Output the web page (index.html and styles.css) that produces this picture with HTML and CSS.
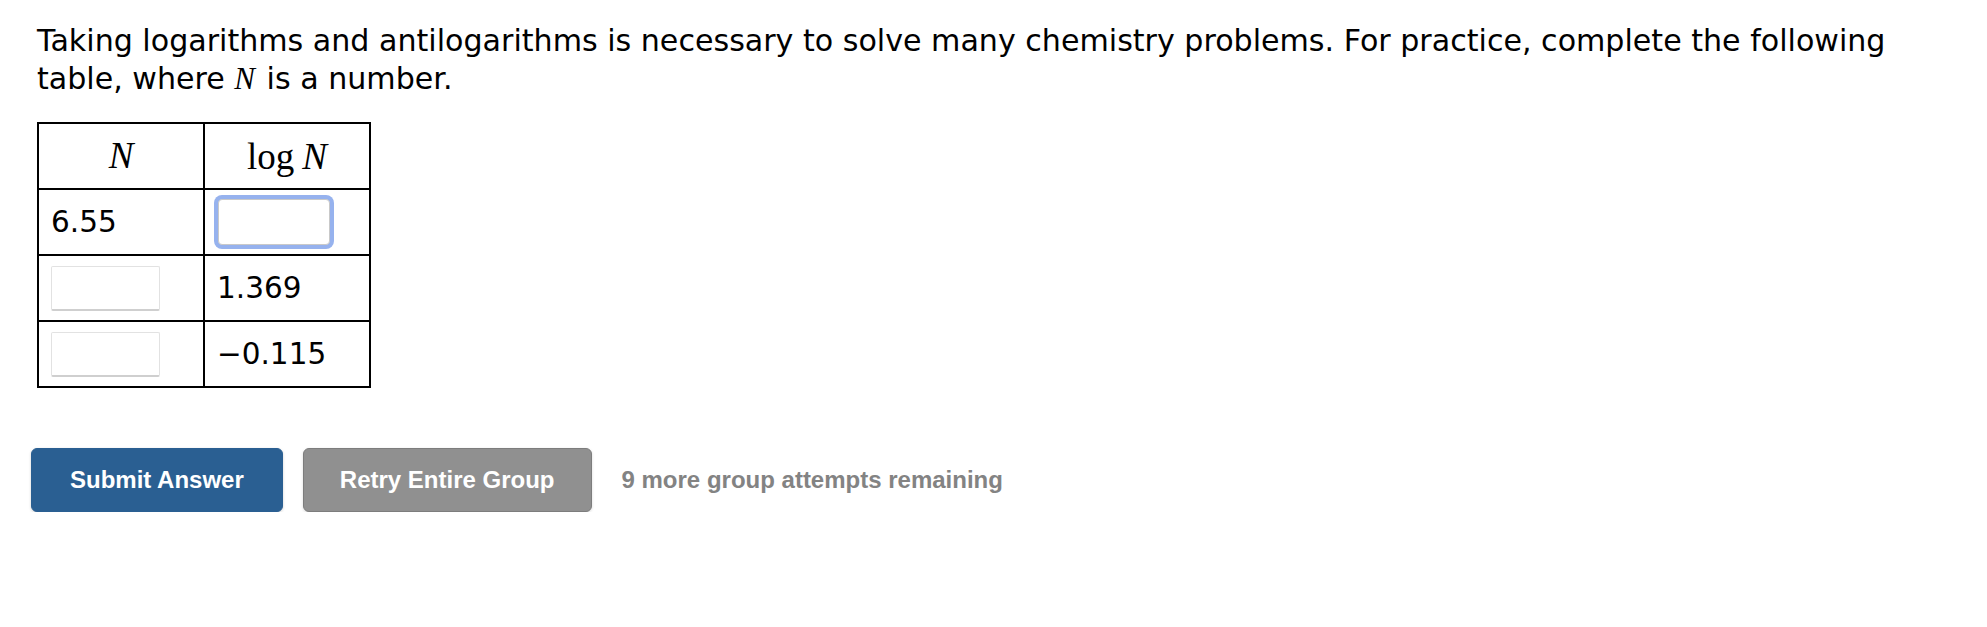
FILE: index.html
```html
<!DOCTYPE html>
<html>
<head>
<meta charset="utf-8">
<link rel="stylesheet" href="styles.css">
</head>
<body>
<div class="page">
  <p class="intro">Taking logarithms and antilogarithms is necessary to solve many chemistry problems. For practice, complete the following table, where <span class="math">N</span> is a number.</p>
  <table class="logtable">
    <tr>
      <th><span class="math hdr">N</span></th>
      <th><span class="mrm">log</span><span class="math hdr">N</span></th>
    </tr>
    <tr>
      <td>6.55</td>
      <td><input class="ans focused" type="text"></td>
    </tr>
    <tr>
      <td><input class="ans" type="text"></td>
      <td>1.369</td>
    </tr>
    <tr>
      <td><input class="ans" type="text"></td>
      <td>&minus;0.115</td>
    </tr>
  </table>
  <div class="actions">
    <button class="btn submit">Submit Answer</button>
    <button class="btn retry">Retry Entire Group</button>
    <span class="remaining">9 more group attempts remaining</span>
  </div>
</div>
</body>
</html>
```
FILE: styles.css
```css
html, body {
  margin: 0;
  padding: 0;
  background: #ffffff;
}
.page {
  padding: 22px 0 0 37px;
}
.intro {
  margin: 0;
  font-family: "DejaVu Sans", Verdana, sans-serif;
  font-size: 30.1px;
  line-height: 38px;
  color: #000;
  max-width: 1880px;
}
.math {
  font-family: "Liberation Serif", "Times New Roman", serif;
  font-style: italic;
  font-size: 31px;
  line-height: 1;
  padding-right: 2px;
}
.mrm {
  font-family: "Liberation Serif", "Times New Roman", serif;
  font-size: 37px;
  margin-right: 8px;
}
.math.hdr {
  font-size: 37px;
  padding-right: 0;
}
.logtable {
  margin-top: 24px;
  border-collapse: collapse;
  font-family: "DejaVu Sans", Verdana, sans-serif;
  font-size: 29.5px;
  color: #000;
}
.logtable th, .logtable td {
  border: 2px solid #000;
  width: 166px;
  height: 66px;
  box-sizing: border-box;
  padding: 0 12px;
  text-align: left;
  vertical-align: middle;
}
.logtable th {
  text-align: center;
  font-weight: normal;
}
.ans {
  display: block;
  box-sizing: border-box;
  width: 109px;
  height: 45px;
  margin: 0;
  border: 1px solid #e2e2e2;
  border-bottom: 2px solid #cfcfcf;
  border-radius: 2px;
  background: #fff;
  padding: 0;
}
.ans.focused {
  border: 1px solid #c9c9c9;
  box-shadow: 0 0 0 4px #96b2ee;
  border-radius: 4px;
  width: 112px;
  height: 46px;
  margin-left: 1px;
}
.actions {
  display: flex;
  align-items: center;
  margin-top: 60px;
  margin-left: -6px;
}
.btn {
  height: 64px;
  padding: 0 38px;
  border-radius: 6px;
  font-family: "Liberation Sans", Arial, sans-serif;
  font-weight: bold;
  font-size: 24px;
  color: #fff;
  white-space: nowrap;
  cursor: pointer;
}
.submit {
  background: #2a5f92;
  border: 1px solid #2a5f92;
  box-shadow: 0 1px 3px rgba(0,0,0,0.18);
}
.retry {
  margin-left: 20px;
  padding: 0 36px;
  background: #909090;
  border: 1px solid #7d7d7d;
  box-shadow: 0 1px 3px rgba(0,0,0,0.15);
}
.remaining {
  margin-left: 30px;
  font-family: "Liberation Sans", Arial, sans-serif;
  font-weight: bold;
  font-size: 24px;
  color: #838383;
  white-space: nowrap;
}
```
